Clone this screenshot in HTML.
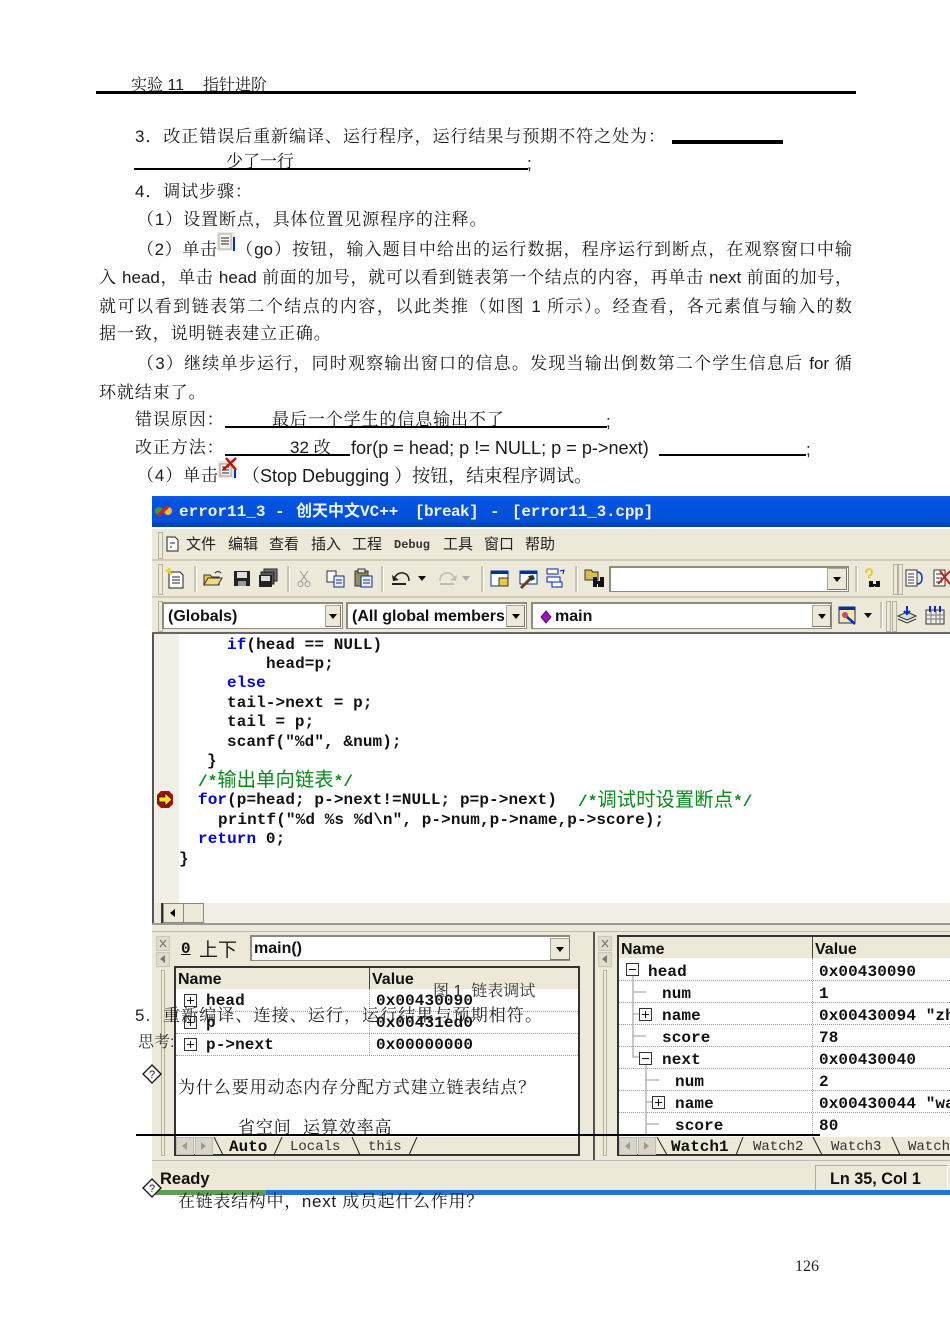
<!DOCTYPE html>
<html lang="zh-CN"><head><meta charset="utf-8">
<style>
html,body{margin:0;padding:0;background:#fff}
#p{position:relative;width:950px;height:1343px;overflow:hidden;background:#fff;font-family:"Liberation Sans","Noto Serif CJK SC",serif;color:#111;filter:blur(.35px)}
.a{position:absolute}
.t{position:absolute;white-space:pre;font-size:17px;line-height:20px;height:20px;color:#1a1a1a}
.j{white-space:normal;text-align:justify;text-align-last:justify;word-spacing:0}
.k{position:absolute;white-space:pre;font:bold 16px/20px "Liberation Mono","Noto Sans CJK SC",monospace;letter-spacing:.1px;color:#111;height:20px}
.kw{color:#0000e0}
.c{color:#0a8a1a;font-weight:normal}
.u{position:absolute;font:bold 16px/18px "Liberation Sans","Noto Sans CJK SC",sans-serif;white-space:pre;color:#111}
.m{position:absolute;font:bold 16px/20px "Liberation Mono",monospace;letter-spacing:.1px;white-space:pre;color:#111}
.tb{position:absolute;font:15px/20px "Noto Sans CJK SC",sans-serif;white-space:pre;color:#222}
.ti{position:absolute;top:502px;font:bold 16px/20px 'Liberation Mono','Noto Sans CJK SC',monospace;color:#eef4ff;white-space:pre}
.sep{position:absolute;width:2px;background:#c8c5b2;border-right:1px solid #fff}
.grip{position:absolute;width:3px;background:#ece9d8;border:1px solid #b5b2a0}
.dot{position:absolute;height:0;border-top:1px dotted #999}
.exp{position:absolute;width:11px;height:11px;border:1px solid #333;background:#fff}
.exp:before{content:"";position:absolute;left:2px;right:2px;top:5px;height:1px;background:#111}
.exp.pl:after{content:"";position:absolute;top:2px;bottom:2px;left:5px;width:1px;background:#111}
.btn{position:absolute;background:#ece9d8;border:1px solid #aaa79a;border-right-color:#77756a;border-bottom-color:#77756a;box-sizing:border-box}
.btn:after{content:"";position:absolute;left:50%;top:50%;margin:-2px 0 0 -4px;border:4px solid transparent;border-top:5px solid #000;border-bottom:0}
.nb{position:absolute;background:#e0ddcc;border:1px solid #c8c5b4;box-sizing:border-box}
.in{position:absolute;background:#fff;border:1px solid #8e8c80;border-top:2px solid #8e8c80;border-left:2px solid #8e8c80;box-sizing:border-box}
</style></head><body><div id="p">

<!-- screenshot -->
<div class="a" style="left:152px;top:496px;width:798px;height:699px;background:#ece9d8"></div>
<div class="a" style="left:152px;top:496px;width:798px;height:31px;background:linear-gradient(#0a5be8 0,#0453e0 20%,#0250d8 80%,#0040b8 100%)"></div>
<svg class="a" style="left:154px;top:503px" width="20" height="16" viewBox="0 0 20 16"><circle cx="5" cy="8" r="4" fill="#3a9a3a"/><circle cx="14" cy="8" r="4" fill="#e8c030"/><path d="M4 13L14 3" stroke="#d02020" stroke-width="3.5"/></svg>
<div class="ti" style="left:179px">error11_3</div>
<div class="ti" style="left:275px">-</div>
<div class="ti" style="left:296px">创天中文VC++</div>
<div class="ti" style="left:415px;letter-spacing:-.6px">[break]</div>
<div class="ti" style="left:490px">-</div>
<div class="ti" style="left:512px;letter-spacing:-.2px">[error11_3.cpp]</div>
<div class="a" style="left:152px;top:527px;width:798px;height:2px;background:#fff"></div>
<div class="a" style="left:152px;top:559px;width:798px;height:2px;background:#cfccba"></div>
<div class="a" style="left:152px;top:596px;width:798px;height:2px;background:#cfccba"></div>
<div class="grip" style="left:158px;top:532px;height:25px"></div>
<div class="grip" style="left:158px;top:564px;height:29px"></div>
<div class="grip" style="left:158px;top:601px;height:29px"></div>

<!-- menu -->
<svg class="a" style="left:165px;top:536px" width="15" height="16"><path d="M2 1h8l3 3v11H2z" fill="#fff" stroke="#222"/><path d="M5 7h5M5 11h2" stroke="#222"/></svg>
<div class="tb" style="left:186px;top:534px">文件</div>
<div class="tb" style="left:228px;top:534px">编辑</div>
<div class="tb" style="left:269px;top:534px">查看</div>
<div class="tb" style="left:311px;top:534px">插入</div>
<div class="tb" style="left:352px;top:534px">工程</div>
<div class="a" style="left:394px;top:535px;font:bold 12px/20px 'Liberation Mono',monospace;color:#333">Debug</div>
<div class="tb" style="left:443px;top:534px">工具</div>
<div class="tb" style="left:484px;top:534px">窗口</div>
<div class="tb" style="left:525px;top:534px">帮助</div>

<!-- toolbar 1 -->
<svg class="a" style="left:164px;top:567px" width="24" height="22"><path d="M5 5h11l3 3v13H5z" fill="#fff" stroke="#222"/><path d="M8 10h8M8 13h8M8 16h8" stroke="#222"/><path d="M2 3l6 4M5 1l1 6" stroke="#e8d020" stroke-width="2"/></svg>
<div class="sep" style="left:194px;top:566px;height:26px"></div>
<svg class="a" style="left:203px;top:569px" width="20" height="18"><path d="M1 6h6l2 2h7v8H1z" fill="#e8c848" stroke="#333"/><path d="M1 16l4-7h14l-4 7z" fill="#f0dc80" stroke="#333"/><path d="M12 4q3-3 6 0" stroke="#222" fill="none"/></svg>
<svg class="a" style="left:233px;top:570px" width="18" height="17"><path d="M1 1h16v15H1z" fill="#222"/><path d="M4 2h10v6H4z" fill="#ddd"/><path d="M5 11h8v5H5z" fill="#999"/></svg>
<svg class="a" style="left:258px;top:568px" width="20" height="20"><path d="M6 1h13v12H6z" fill="#777" stroke="#222"/><path d="M3 4h13v12H3z" fill="#555" stroke="#222"/><path d="M1 7h13v12H1z" fill="#222"/><path d="M3 8h9v5H3z" fill="#ddd"/></svg>
<div class="sep" style="left:287px;top:566px;height:26px"></div>
<svg class="a" style="left:297px;top:570px" width="14" height="18"><path d="M3 1l7 10M11 1L4 11" stroke="#999" fill="none"/><circle cx="3.500" cy="14" r="2.500" fill="none" stroke="#999"/><circle cx="10.500" cy="14" r="2.500" fill="none" stroke="#999"/></svg>
<svg class="a" style="left:326px;top:570px" width="20" height="18"><path d="M1 1h9v11H1z" fill="#fff" stroke="#333"/><path d="M8 6h10v11H8z" fill="#eef" stroke="#00309a"/><path d="M10 10h6M10 13h6" stroke="#00309a"/></svg>
<svg class="a" style="left:353px;top:568px" width="20" height="20"><path d="M2 3h13v15H2z" fill="#9a8a5a" stroke="#333"/><path d="M5 1h7v4H5z" fill="#ddd" stroke="#333"/><path d="M8 8h11v11H8z" fill="#eef" stroke="#00309a"/><path d="M10 12h7M10 15h7" stroke="#00309a"/></svg>
<div class="sep" style="left:381px;top:566px;height:26px"></div>
<svg class="a" style="left:391px;top:570px" width="22" height="17"><path d="M3 9Q6 2 12 3t6 8" stroke="#222" stroke-width="1.500" fill="none"/><path d="M1 5l1 6 6-1z" fill="#222"/><path d="M1 14h14" stroke="#222" stroke-width="2"/></svg>
<div class="a" style="left:418px;top:576px;border:4px solid transparent;border-top:5px solid #111"></div>
<svg class="a" style="left:436px;top:570px" width="22" height="17"><path d="M19 9Q16 2 10 3T4 11" stroke="#bbb" stroke-width="1.500" fill="none"/><path d="M21 5l-1 6-6-1z" fill="#bbb"/><path d="M4 14h14" stroke="#bbb" stroke-width="2"/></svg>
<div class="a" style="left:462px;top:576px;border:4px solid transparent;border-top:5px solid #aaa"></div>
<div class="sep" style="left:481px;top:566px;height:26px"></div>
<svg class="a" style="left:490px;top:569px" width="20" height="19"><path d="M1 2h17v15H1z" fill="#fff" stroke="#00309a"/><path d="M1 2h17v3H1z" fill="#00309a"/><path d="M9 9h9v8H9z" fill="#e8c848" stroke="#333"/></svg>
<svg class="a" style="left:519px;top:569px" width="20" height="20"><path d="M1 2h17v13H1z" fill="#fff" stroke="#00309a"/><path d="M1 2h17v3H1z" fill="#00309a"/><path d="M2 19L12 9" stroke="#6a3a1a" stroke-width="3"/><path d="M9 7l5-1 2 4-4 2z" fill="#333"/></svg>
<svg class="a" style="left:546px;top:568px" width="20" height="20"><path d="M1 1h11v5H1zM1 9h13v5H1zM6 14h10v5H6z" fill="#fff" stroke="#0020c0"/><path d="M14 3l4-1-1 4" stroke="#0020c0" fill="none"/></svg>
<div class="sep" style="left:575px;top:566px;height:26px"></div>
<svg class="a" style="left:584px;top:569px" width="22" height="19"><path d="M1 1h6l2 2h5v8H1z" fill="#d8c040" stroke="#333"/><path d="M9 8h4v4h3V8h4v10h-6v-3h-1v3H9z" fill="#111"/></svg>
<div class="in" style="left:609px;top:566px;width:240px;height:26px"></div>
<div class="btn" style="left:827px;top:568px;width:20px;height:22px"></div>
<div class="sep" style="left:855px;top:566px;height:26px"></div>
<svg class="a" style="left:863px;top:567px" width="22" height="22"><path d="M3 6q0-4 3-4t3 3-3 4v2" stroke="#e8d020" stroke-width="2" fill="none"/><path d="M6 14h4v3h3v-3h4v6h-5v-1h-1v1H6z" fill="#111"/></svg>
<div class="grip" style="left:893px;top:564px;height:29px"></div>
<div class="grip" style="left:898px;top:564px;height:29px"></div>
<svg class="a" style="left:904px;top:568px" width="20" height="20"><path d="M2 2h11v16H2z" fill="#fff" stroke="#333"/><path d="M4 6h6M4 9h6M4 12h6M4 15h6" stroke="#333"/><path d="M13 4q5 0 5 6t-5 6" stroke="#0040c0" stroke-width="1.500" fill="none"/></svg>
<svg class="a" style="left:932px;top:568px" width="18" height="20"><path d="M2 2h11v16H2z" fill="#fff" stroke="#333"/><path d="M4 6h6M4 10h6M4 14h6" stroke="#333"/><path d="M6 16L18 3M8 3l10 13" stroke="#c02020" stroke-width="2"/></svg>

<!-- toolbar 2 -->
<div class="in" style="left:162px;top:602px;width:181px;height:27px"></div>
<div class="btn" style="left:325px;top:605px;width:16px;height:22px"></div>
<div class="u" style="left:168px;top:608px">(Globals)</div>
<div class="in" style="left:346px;top:602px;width:181px;height:27px"></div>
<div class="u" style="left:352px;top:608px;width:154px;overflow:hidden">(All global members</div>
<div class="btn" style="left:506px;top:605px;width:19px;height:22px"></div>
<div class="in" style="left:531px;top:602px;width:301px;height:27px"></div>
<svg class="a" style="left:540px;top:610px" width="12" height="14"><path d="M6 1l5 6-5 6-5-6z" fill="#a010c0" stroke="#50106a"/></svg>
<div class="u" style="left:555px;top:608px">main</div>
<div class="btn" style="left:812px;top:605px;width:19px;height:22px"></div>
<svg class="a" style="left:837px;top:605px" width="22" height="22"><path d="M2 2h16v16H2z" fill="#f8e8a0" stroke="#00309a"/><path d="M2 2h16v3H2z" fill="#00309a"/><circle cx="8" cy="10" r="3" fill="#d04080"/><path d="M10 12l8 7" stroke="#0030c0" stroke-width="2.500"/></svg>
<div class="a" style="left:864px;top:613px;border:4px solid transparent;border-top:5px solid #111"></div>
<div class="sep" style="left:880px;top:602px;height:26px"></div>
<div class="grip" style="left:886px;top:601px;height:29px"></div>
<div class="grip" style="left:892px;top:601px;height:29px"></div>
<svg class="a" style="left:897px;top:604px" width="20" height="22"><path d="M1 12l9-4 9 4-9 4z" fill="#ddd" stroke="#333"/><path d="M1 15l9 4 9-4" stroke="#333" fill="none"/><path d="M10 2v8M7 7l3 3 3-3" stroke="#0030c0" stroke-width="2" fill="none"/></svg>
<svg class="a" style="left:925px;top:604px" width="20" height="22"><path d="M1 6h18v14H1z" fill="#eee" stroke="#333"/><path d="M1 11h18M1 15h18M6 6v14M11 6v14M15 6v14" stroke="#777"/><path d="M5 2v6M10 2v6M15 2v6" stroke="#0030c0" stroke-width="2"/></svg>

<!-- editor -->
<div class="a" style="left:152px;top:632px;width:798px;height:2px;background:#666"></div>
<div class="a" style="left:152px;top:634px;width:798px;height:270px;background:#fff"></div>
<div class="a" style="left:154px;top:634px;width:25px;height:270px;background:#f1efe6"></div>
<div class="a" style="left:152px;top:634px;width:2px;height:290px;background:#555"></div>
<div class="k" style="left:227px;top:635px"><span class="kw">if</span>(head == NULL)</div>
<div class="k" style="left:266px;top:654px">head=p;</div>
<div class="k kw" style="left:227px;top:673px">else</div>
<div class="k" style="left:227px;top:693px">tail-&gt;next = p;</div>
<div class="k" style="left:227px;top:712px">tail = p;</div>
<div class="k" style="left:227px;top:732px">scanf("%d", &amp;num);</div>
<div class="k" style="left:207px;top:751px">}</div>
<div class="k c" style="left:198px;top:771px;font-size:16px;font-family:'Liberation Mono','Noto Sans CJK SC',monospace"><b>/*</b><span style="font-size:19.300px">输出单向链表</span><b>*/</b></div>
<svg class="a" style="left:156px;top:790px" width="18" height="19"><path d="M5 1h8l4 4v9l-4 4H5l-4-4V5z" fill="#a01010"/><path d="M3 7h6V3l7 6.500-7 6.500v-4H3z" fill="#f8e020" stroke="#301000" stroke-width=".7"/></svg>
<div class="k" style="left:198px;top:790px"><span class="kw">for</span>(p=head; p-&gt;next!=NULL; p=p-&gt;next)</div>
<div class="k c" style="left:578px;top:791px;font-family:'Liberation Mono','Noto Sans CJK SC',monospace"><b>/*</b><span style="font-size:19.300px">调试时设置断点</span><b>*/</b></div>
<div class="k" style="left:218px;top:810px">printf("%d %s %d\n", p-&gt;num,p-&gt;name,p-&gt;score);</div>
<div class="k" style="left:198px;top:829px"><span class="kw">return</span> 0;</div>
<div class="k" style="left:179px;top:849px">}</div>
<div class="a" style="left:154px;top:903px;width:796px;height:20px;background:#f1efe6"></div>
<div class="a" style="left:154px;top:903px;width:7px;height:20px;background:#ece9d8;border-right:2px solid #333"></div>
<div class="a" style="left:163px;top:903px;width:21px;height:20px;background:#ece9d8;border:1px solid #888;box-sizing:border-box"></div>
<div class="a" style="left:170px;top:909px;border:4px solid transparent;border-right:5px solid #000;border-left:0"></div>
<div class="a" style="left:183px;top:903px;width:21px;height:20px;background:#ece9d8;border:1px solid #888;box-sizing:border-box"></div>
<div class="a" style="left:152px;top:923px;width:798px;height:2px;background:#999"></div>
<div class="a" style="left:152px;top:931px;width:798px;height:1px;background:#bbb"></div>

<!-- left panel -->
<div class="nb" style="left:156px;top:936px;width:14px;height:15px"></div>
<svg class="a" style="left:156px;top:936px" width="14" height="15"><path d="M4 4l6 7M10 4l-6 7" stroke="#777" stroke-width="1.300"/></svg>
<div class="nb" style="left:156px;top:952px;width:14px;height:15px"></div>
<div class="a" style="left:160px;top:955px;border:4px solid transparent;border-right:5px solid #777;border-left:0"></div>
<div class="grip" style="left:161px;top:970px;height:184px;width:2px"></div>
<div class="a" style="left:181px;top:939px;font:bold 16px/20px 'Liberation Mono',monospace;text-decoration:underline">0</div>
<div class="a" style="left:199px;top:938px;font:19px/22px 'Noto Sans CJK SC',sans-serif;color:#222">上下</div>
<div class="in" style="left:250px;top:935px;width:320px;height:26px"></div>
<div class="u" style="left:254px;top:940px">main()</div>
<div class="btn" style="left:550px;top:938px;width:20px;height:22px"></div>

<div class="a" style="left:174px;top:966px;width:406px;height:190px;background:#fff;border:2px solid #333;box-sizing:border-box"></div>
<div class="a" style="left:176px;top:968px;width:402px;height:21px;background:#ece9d8"></div>
<div class="a" style="left:369px;top:968px;width:1px;height:21px;background:#444"></div>
<div class="a" style="left:369px;top:989px;height:66px;border-left:1px dotted #aaa"></div>
<div class="u" style="left:178px;top:971px">Name</div>
<div class="u" style="left:372px;top:971px">Value</div>
<div class="dot" style="left:176px;top:1011px;width:402px"></div>
<div class="dot" style="left:176px;top:1033px;width:402px"></div>
<div class="dot" style="left:176px;top:1055px;width:402px"></div>
<div class="exp pl" style="left:184px;top:994px"></div>
<div class="exp pl" style="left:184px;top:1016px"></div>
<div class="exp pl" style="left:184px;top:1038px"></div>
<div class="m" style="left:206px;top:991px">head</div>
<div class="m" style="left:206px;top:1013px">p</div>
<div class="m" style="left:206px;top:1035px">p-&gt;next</div>
<div class="m" style="left:376px;top:991px">0x00430090</div>
<div class="m" style="left:376px;top:1013px">0x00431ed0</div>
<div class="m" style="left:376px;top:1035px">0x00000000</div>
<div class="a" style="left:176px;top:1137px;width:402px;height:17px;background:#ece9d8"></div>
<div class="a" style="left:176px;top:1137px;width:18px;height:18px;background:#d8d5c4;border:1px solid #bbb;box-sizing:border-box"></div>
<div class="a" style="left:182px;top:1142px;border:4px solid transparent;border-right:5px solid #999;border-left:0"></div>
<div class="a" style="left:195px;top:1137px;width:18px;height:18px;background:#d8d5c4;border:1px solid #bbb;box-sizing:border-box"></div>
<div class="a" style="left:201px;top:1142px;border:4px solid transparent;border-left:5px solid #999;border-right:0"></div>
<svg class="a" style="left:213px;top:1136px" width="210" height="20"><path d="M1 1l9 18M69 1l-8 18M139 1l8 18M204 1l-8 18" stroke="#222" fill="none"/></svg>
<div class="a" style="left:229px;top:1137px;font:bold 16px/20px 'Liberation Mono',monospace">Auto</div>
<div class="a" style="left:290px;top:1137px;font:14px/20px 'Liberation Mono',monospace;color:#333">Locals</div>
<div class="a" style="left:368px;top:1137px;font:14px/20px 'Liberation Mono',monospace;color:#333">this</div>

<!-- right panel -->
<div class="a" style="left:593px;top:932px;width:2px;height:228px;background:#555"></div>
<div class="nb" style="left:598px;top:936px;width:14px;height:15px"></div>
<svg class="a" style="left:598px;top:936px" width="14" height="15"><path d="M4 4l6 7M10 4l-6 7" stroke="#777" stroke-width="1.300"/></svg>
<div class="nb" style="left:598px;top:952px;width:14px;height:15px"></div>
<div class="a" style="left:602px;top:955px;border:4px solid transparent;border-right:5px solid #777;border-left:0"></div>
<div class="grip" style="left:603px;top:970px;height:184px;width:2px"></div>
<div class="a" style="left:617px;top:935px;width:340px;height:221px;background:#fff;border:2px solid #333;box-sizing:border-box"></div>
<div class="a" style="left:619px;top:937px;width:331px;height:21px;background:#ece9d8"></div>
<div class="a" style="left:812px;top:937px;width:1px;height:21px;background:#444"></div>
<div class="a" style="left:812px;top:958px;height:176px;border-left:1px dotted #aaa"></div>
<div class="u" style="left:621px;top:941px">Name</div>
<div class="u" style="left:815px;top:941px">Value</div>
<div class="dot" style="left:619px;top:980px;width:331px"></div>
<div class="dot" style="left:619px;top:1002px;width:331px"></div>
<div class="dot" style="left:619px;top:1024px;width:331px"></div>
<div class="dot" style="left:619px;top:1046px;width:331px"></div>
<div class="dot" style="left:619px;top:1068px;width:331px"></div>
<div class="dot" style="left:619px;top:1090px;width:331px"></div>
<div class="dot" style="left:619px;top:1112px;width:331px"></div>
<svg class="a" style="left:625px;top:960px" width="60" height="176"><path d="M8 16V97H15M8 32H21M8 54H15M8 76H21M21 105V174M21 120H34M21 142H28M21 164H34" stroke="#aaa" stroke-width="1.300" fill="none"/></svg>
<div class="exp" style="left:626px;top:963px"></div>
<div class="exp pl" style="left:639px;top:1008px"></div>
<div class="exp" style="left:639px;top:1052px"></div>
<div class="exp pl" style="left:652px;top:1096px"></div>
<div class="m" style="left:648px;top:962px">head</div>
<div class="m" style="left:662px;top:984px">num</div>
<div class="m" style="left:662px;top:1006px">name</div>
<div class="m" style="left:662px;top:1028px">score</div>
<div class="m" style="left:662px;top:1050px">next</div>
<div class="m" style="left:675px;top:1072px">num</div>
<div class="m" style="left:675px;top:1094px">name</div>
<div class="m" style="left:675px;top:1116px">score</div>
<div class="m" style="left:819px;top:962px">0x00430090</div>
<div class="m" style="left:819px;top:984px">1</div>
<div class="m" style="left:819px;top:1006px">0x00430094 "zh</div>
<div class="m" style="left:819px;top:1028px">78</div>
<div class="m" style="left:819px;top:1050px">0x00430040</div>
<div class="m" style="left:819px;top:1072px">2</div>
<div class="m" style="left:819px;top:1094px">0x00430044 "wa</div>
<div class="m" style="left:819px;top:1116px">80</div>
<div class="a" style="left:619px;top:1137px;width:331px;height:17px;background:#ece9d8"></div>
<div class="a" style="left:619px;top:1137px;width:18px;height:18px;background:#d8d5c4;border:1px solid #bbb;box-sizing:border-box"></div>
<div class="a" style="left:625px;top:1142px;border:4px solid transparent;border-right:5px solid #999;border-left:0"></div>
<div class="a" style="left:638px;top:1137px;width:18px;height:18px;background:#d8d5c4;border:1px solid #bbb;box-sizing:border-box"></div>
<div class="a" style="left:644px;top:1142px;border:4px solid transparent;border-left:5px solid #999;border-right:0"></div>
<svg class="a" style="left:656px;top:1136px" width="294" height="20"><path d="M1 1l10 18M87 1l-7 18M157 1l9 18M236 1l8 18" stroke="#222" fill="none"/></svg>
<div class="a" style="left:671px;top:1137px;font:bold 16px/20px 'Liberation Mono',monospace">Watch1</div>
<div class="a" style="left:753px;top:1137px;font:14px/20px 'Liberation Mono',monospace;color:#333">Watch2</div>
<div class="a" style="left:831px;top:1137px;font:14px/20px 'Liberation Mono',monospace;color:#333">Watch3</div>
<div class="a" style="left:908px;top:1137px;font:14px/20px 'Liberation Mono',monospace;color:#333">Watch</div>

<!-- status -->
<div class="a" style="left:152px;top:1160px;width:798px;height:1px;background:#bbb"></div>
<div class="u" style="left:160px;top:1170px;font-size:16.500px">Ready</div>
<div class="a" style="left:815px;top:1165px;width:133px;height:25px;border:1px solid #aaa;border-right-color:#fff;border-bottom:0;box-sizing:border-box"></div>
<div class="u" style="left:830px;top:1170px;font-size:16.200px">Ln 35, Col 1</div>
<div class="a" style="left:152px;top:1190px;width:798px;height:5px;background:#2a6fd8"></div>
<div class="a" style="left:152px;top:1190px;width:114px;height:5px;background:#5aa050"></div>

<!-- header -->
<div class="t" style="left:131px;top:76px;font-size:16px">实验 11</div>
<div class="t" style="left:203px;top:76px;font-size:16px">指针进阶</div>
<div class="a" style="left:96px;top:91px;width:760px;height:3px;background:#000"></div>
<div class="t j" style="left:135px;top:127px;width:530px">3．改正错误后重新编译、运行程序，运行结果与预期不符之处为：</div>
<div class="a" style="left:672px;top:140px;width:111px;height:4px;background:#000"></div>
<div class="t" style="left:226px;top:152px">少了一行</div>
<div class="a" style="left:134px;top:168px;width:394px;height:2px;background:#000"></div>
<div class="t" style="left:527px;top:154px">;</div>
<div class="t" style="left:135px;top:182px;letter-spacing:.9px">4．调试步骤：</div>
<div class="t" style="left:137px;top:210px;letter-spacing:.9px">（1）设置断点，具体位置见源程序的注释。</div>
<div class="t j" style="left:137px;top:240px;width:80px">（2）单击</div>
<svg class="a" style="left:217px;top:232px" width="19" height="20"><path d="M0 0h17v19H0z" fill="#e8e8dc"/><path d="M2 2h12v15H2z" fill="#f8f8f0" stroke="#aaa"/><path d="M4 6h8M4 9h8M4 12h8" stroke="#222"/><path d="M17 5v14" stroke="#0030c0" stroke-width="2"/></svg>
<div class="t j" style="left:236px;top:240px;width:616px">（go）按钮，输入题目中给出的运行数据，程序运行到断点，在观察窗口中输</div>
<div class="t j" style="left:99px;top:268px;width:753px">入 head，单击 head 前面的加号，就可以看到链表第一个结点的内容，再单击 next 前面的加号，</div>
<div class="t j" style="left:99px;top:297px;width:753px">就可以看到链表第二个结点的内容，以此类推（如图 1 所示）。经查看，各元素值与输入的数</div>
<div class="t" style="left:99px;top:324px;letter-spacing:.9px">据一致，说明链表建立正确。</div>
<div class="t j" style="left:137px;top:354px;width:715px">（3）继续单步运行，同时观察输出窗口的信息。发现当输出倒数第二个学生信息后 for 循</div>
<div class="t" style="left:99px;top:383px;letter-spacing:.9px">环就结束了。</div>
<div class="t" style="left:135px;top:410px;letter-spacing:.9px">错误原因：</div>
<div class="t" style="left:272px;top:410px;letter-spacing:.9px">最后一个学生的信息输出不了</div>
<div class="a" style="left:225px;top:426px;width:382px;height:2px;background:#000"></div>
<div class="t" style="left:606px;top:412px">;</div>
<div class="t" style="left:135px;top:438px;letter-spacing:.9px">改正方法：</div>
<div class="t" style="left:290px;top:438px;font-size:17px">32 改</div>
<div class="a" style="left:225px;top:454px;width:125px;height:2px;background:#000"></div>
<div class="t" style="left:351px;top:438px;font-size:18.100px">for(p = head; p != NULL; p = p-&gt;next)</div>
<div class="a" style="left:659px;top:454px;width:147px;height:2px;background:#000"></div>
<div class="t" style="left:806px;top:440px">;</div>
<div class="t" style="left:137px;top:466px;letter-spacing:.9px">（4）单击</div>
<svg class="a" style="left:217px;top:456px" width="24" height="23"><path d="M1 5h17v17H1z" fill="#e8e8dc"/><path d="M3 8h11v12H3z" fill="#f8f8f0" stroke="#999"/><path d="M5 11h7M5 14h7M5 17h7" stroke="#222"/><path d="M6 14L19 2M9 2l10 12" stroke="#c01010" stroke-width="2.500"/><path d="M18 14v8" stroke="#0030c0" stroke-width="2"/></svg>
<div class="t" style="left:242px;top:466px;font-size:18px">（Stop Debugging ）按钮，结束程序调试。</div>

<!-- overlay text -->
<div class="t" style="left:433px;top:982px;font-size:16px;color:#333">图 1  链表调试</div>
<div class="t" style="left:135px;top:1006px;letter-spacing:1.100px;color:#222">5.</div>
<div class="t" style="left:163px;top:1006px;letter-spacing:1.100px;color:#222">重新编译、连接、运行，运行结果与预期相符。</div>
<div class="t" style="left:138px;top:1033px;font-size:16px;color:#333">思考:</div>
<svg class="a" style="left:142px;top:1064px" width="20" height="20"><path d="M10 1l9 9-9 9-9-9z" fill="#fff" stroke="#111" stroke-width="1.300"/><text x="10" y="14" font-size="11" font-family="Liberation Sans" text-anchor="middle" fill="#111">?</text></svg>
<div class="t" style="left:178px;top:1078px;letter-spacing:.9px">为什么要用动态内存分配方式建立链表结点？</div>
<div class="t" style="left:238px;top:1118px;letter-spacing:.9px">省空间  运算效率高</div>
<div class="a" style="left:136px;top:1134px;width:684px;height:2px;background:#000"></div>
<svg class="a" style="left:142px;top:1178px" width="20" height="20"><path d="M10 1l9 9-9 9-9-9z" fill="#fff" stroke="#111" stroke-width="1.300"/><text x="10" y="14" font-size="11" font-family="Liberation Sans" text-anchor="middle" fill="#111">?</text></svg>
<div class="t" style="left:178px;top:1192px;letter-spacing:.7px">在链表结构中，next 成员起什么作用？</div>
<div class="a" style="left:795px;top:1257px;font:16px/20px 'Liberation Serif',serif;color:#222">126</div>
</div></body></html>
